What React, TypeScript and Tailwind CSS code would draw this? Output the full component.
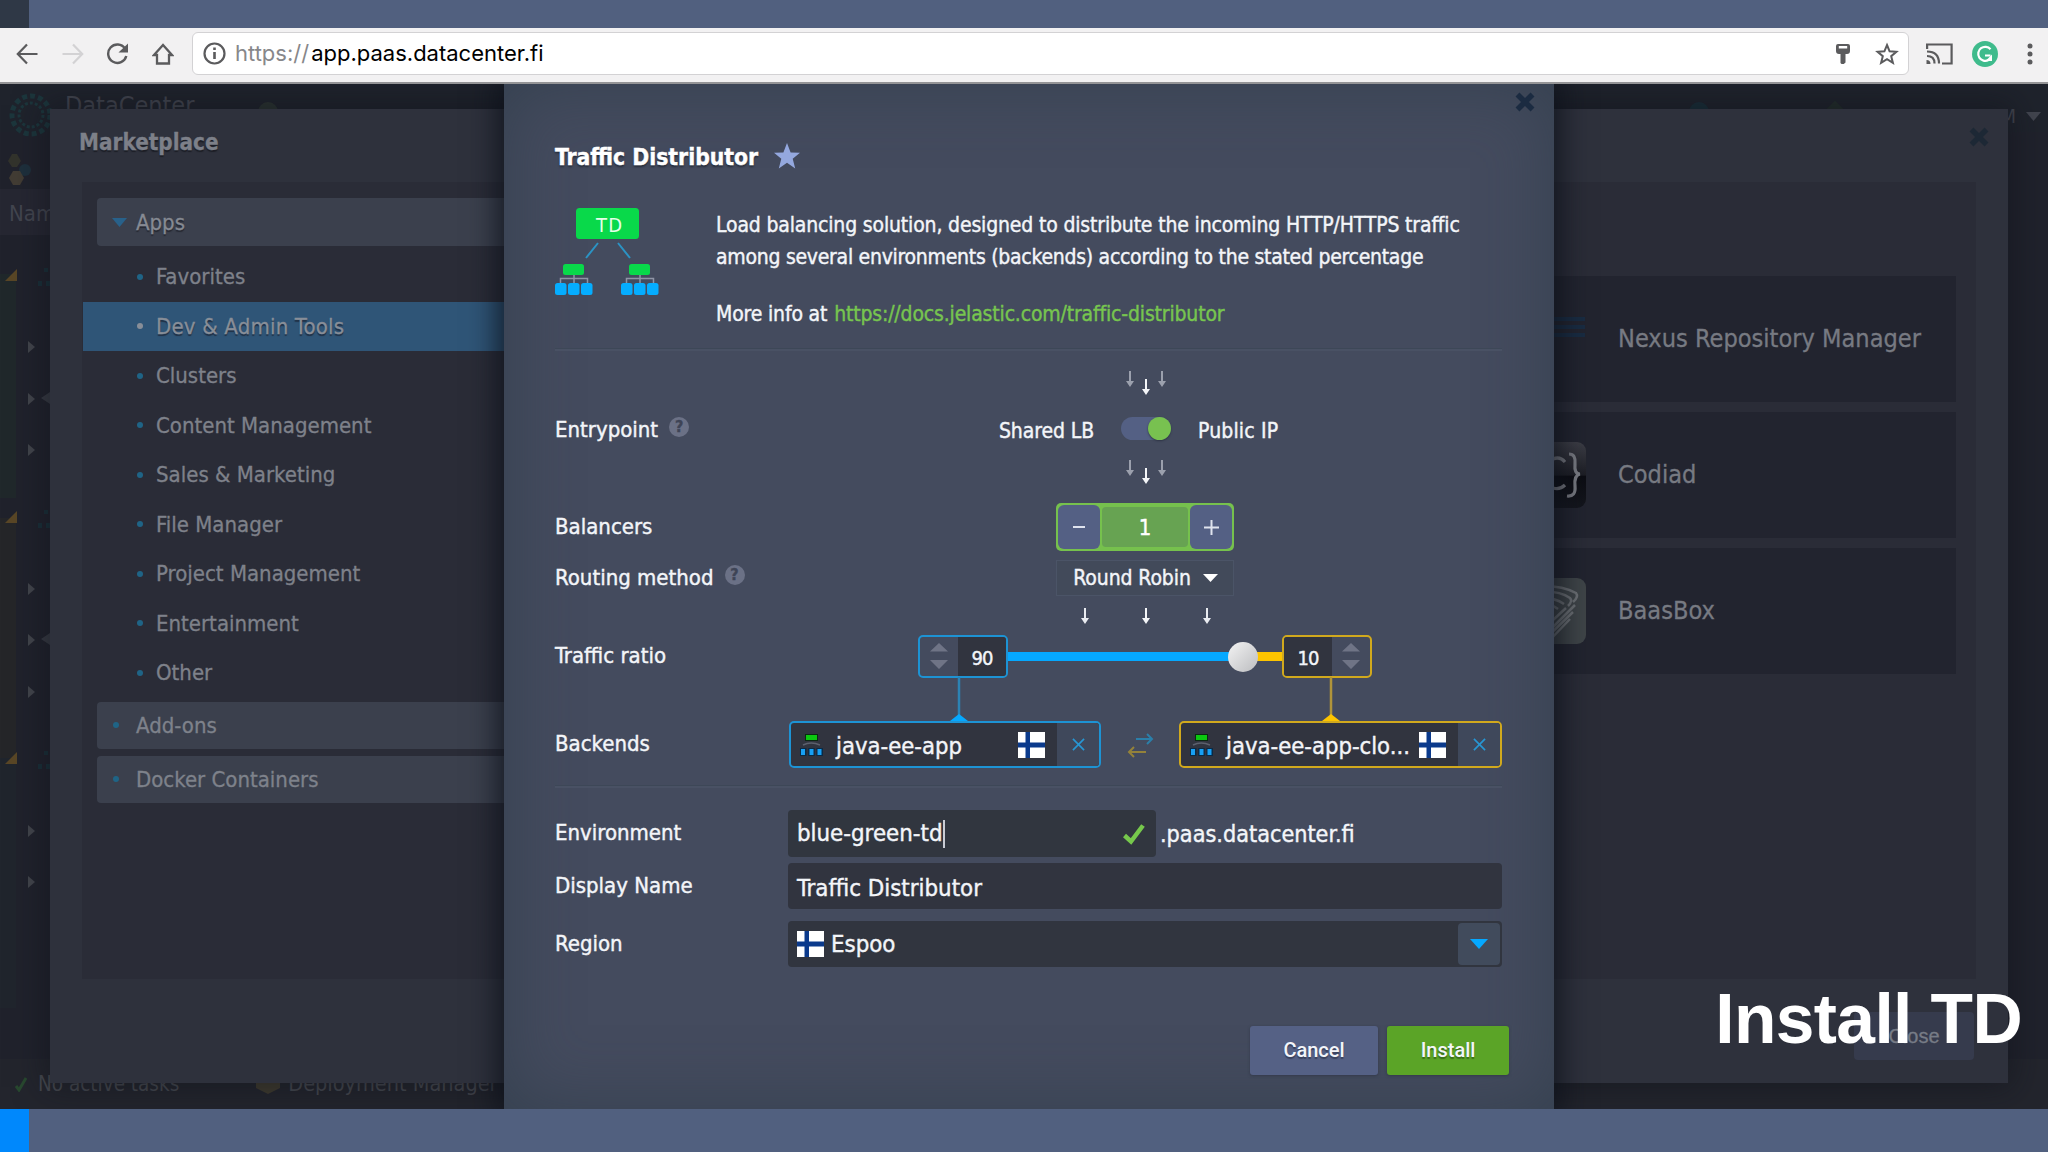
import { ReactNode } from "react";
import { clsx } from "clsx";

const appCategories = [
    "Favorites",
    "Dev & Admin Tools",
    "Clusters",
    "Content Management",
    "Sales & Marketing",
    "File Manager",
    "Project Management",
    "Entertainment",
    "Other",
];

const treeCorners = [197, 439, 680];
const treeArrows = [263, 315, 366, 505, 556, 608, 747, 798];

function BrowserBar() {
    return (
        <header className="flex h-14 shrink-0 items-center border-b-2 border-[#949496] bg-[#f2f1f2] pt-px pr-[13px] pl-4 text-[#5b5b5d]">
            <svg className="mb-1 h-[22px] w-[22px]" viewBox="0 0 22 22" fill="none" stroke="currentColor" strokeWidth="2.2">
                <path d="M21.5 11H2M11 1.5L1.8 11l9.2 9.5" />
            </svg>
            <svg className="mb-1 ml-6 h-[22px] w-[22px] text-[#d3d2d4]" viewBox="0 0 22 22" fill="none" stroke="currentColor" strokeWidth="2.2">
                <path d="M.5 11H20M11 1.5l9.2 9.5-9.2 9.5" />
            </svg>
            <svg className="mb-1 ml-[22px] h-[22px] w-[23px]" viewBox="0 0 23 22" fill="none">
                <path d="M19 5.5A9.2 9.2 0 1 0 20.3 13" stroke="currentColor" strokeWidth="2.4" />
                <path d="M22 .5v9h-9.5z" fill="currentColor" />
            </svg>
            <svg className="mb-1 ml-[23px] h-[22px] w-[22px]" viewBox="0 0 22 22" fill="none" stroke="currentColor" strokeWidth="2.3">
                <path d="M11 2L2 12h3v8.500h12V12h3z" />
            </svg>
            <div className="mb-1 ml-[18px] flex h-[43px] w-[1717px] items-center rounded-md border border-[#d3d2d4] bg-white pr-[9px] pl-[10px]">
                <svg className="h-[23px] w-[23px]" viewBox="0 0 23 23" fill="none" stroke="currentColor" strokeWidth="2.2">
                    <circle cx="11.5" cy="11.5" r="10" />
                    <path d="M11.5 10v7M11.5 5.500v2.500" strokeWidth="2.6" />
                </svg>
                <p className="mb-px ml-[9px] flex-1 font-['Inter',sans-serif] text-[22px] leading-none text-black">
                    <span className="mr-0.5 text-[#87878a]">https://</span>app.paas.datacenter.fi
                </p>
                <svg className="h-5 w-4" viewBox="0 0 16 20" fill="currentColor">
                    <path fillRule="evenodd" d="M3 0h10q2 0 2 2v5q0 3-3 3h-1.500v8.500L8.800 20H6.500l-1-1V10H4Q1 10 1 7V2q0-2 2-2zm.8 2v2.500h8.400V2z" />
                </svg>
                <svg className="ml-6 h-6 w-6" viewBox="0 0 24 24" fill="none" stroke="currentColor" strokeWidth="2">
                    <path d="M12 3l2.600 6.300 6.800.5-5.200 4.400 1.700 6.700L12 17.200l-5.900 3.700 1.700-6.700-5.200-4.400 6.800-.5z" />
                </svg>
            </div>
            <svg className="mb-1 ml-[17px] h-[22px] w-[27px]" viewBox="0 0 27 22" fill="none" stroke="currentColor" strokeWidth="2.2">
                <path d="M1.100 6V1.500h24.500v19H16M1 8.500q12 0 12 12M1 13q7.500 0 7.500 7.500" />
                <path d="M.5 17q4 0 4 4h-4z" fill="currentColor" stroke="none" />
            </svg>
            <svg className="mb-1 ml-[19px] h-[26px] w-[26px]" viewBox="0 0 26 26" fill="none">
                <circle cx="13" cy="13" r="13" fill="#3fbb8c" />
                <path d="M18.500 8.200A7 7 0 1 0 16.500 19M13 14.500h5.500" stroke="#fff" strokeWidth="2.200" />
                <path d="M20 13.500v6.500h-6.500z" fill="#fff" />
            </svg>
            <svg className="mb-1 ml-[29px] h-[22px] w-[6px]" viewBox="0 0 6 22" fill="currentColor">
                <circle cx="3" cy="3" r="2.5" />
                <circle cx="3" cy="11" r="2.5" />
                <circle cx="3" cy="19" r="2.5" />
            </svg>
        </header>
    );
}

function Dashboard() {
    return (
        <div className="flex h-full flex-col justify-between bg-[#20222c] text-[#42454f]">
            <div className="flex h-12 items-start bg-[#1f232c] pl-[65px]">
                <span className="mt-[6px] text-[25px] leading-8">DataCenter</span>
                <span className="mt-[18px] ml-16 h-5 w-5 rounded-full bg-[#2a3331]" />
                <span className="mt-[18px] ml-[1411px] h-5 w-5 rounded-full bg-[#192e38]" />
                <span className="mt-[19px] ml-[120px] h-3 w-3 rotate-45 bg-[#222d2b]" />
                <span className="mt-[18px] ml-[159px] text-[20px] leading-[28px]">M</span>
                <svg className="mt-[28px] ml-[10px] h-[9px] w-[15px]" viewBox="0 0 15 9" fill="currentColor">
                    <path d="M0 0h15L7.500 9z" />
                </svg>
            </div>
            <svg className="absolute top-0 left-0 h-full w-14" viewBox="0 0 56 1025" fill="none">
                <g stroke="#1c363c" strokeWidth="5">
                    <circle cx="31" cy="31" r="19" strokeDasharray="5 3" />
                    <circle cx="31" cy="31" r="12" strokeWidth="3" strokeDasharray="3 2" />
                </g>
                <path d="M8 77l4-7h5l4 7-4 6h-5z" fill="#32332c" />
                <circle cx="25" cy="86" r="6" fill="#1e303c" />
                <path d="M9 94l4-7h7l4 7-4 7h-7z" fill="#423c34" />
                <path d="M0 105h56v46H0z" fill="#262732" />
                <path d="M0 190h16v224H0z" fill="#20282b" />
                <path d="M0 434h16v240H0z" fill="#252629" />
                <path d="M0 674h16v250H0z" fill="#20252d" />
                {treeCorners.map((y) => (
                    <g key={y}>
                        <path d={`M5 ${y}l12-12v12z`} fill="#594626" />
                        <path d={`M40 ${y}v5M48 ${y}v5M46 ${y - 13}v4`} stroke="#1a3039" strokeWidth="4" />
                    </g>
                ))}
                {treeArrows.map((y) => (
                    <path key={y} d={`M28 ${y - 6}l7 6-7 6z`} fill="#42454c" />
                ))}
                <path d="M41 314l9-6v12zM41 555l9-6v12z" fill="#373a43" />
            </svg>
            <span className="absolute top-[116px] left-[9px] w-[41px] overflow-hidden text-[22px] leading-7">Name</span>
            <div className="flex h-[50px] items-center bg-[#23252d] pl-[15px] text-[#45484f]">
                <svg className="h-4 w-3" viewBox="0 0 12 16" fill="none" stroke="#28482f" strokeWidth="3">
                    <path d="M1 10l3 4 7-12" />
                </svg>
                <span className="ml-[11px] text-[20.5px]">No active tasks</span>
                <svg className="ml-[77px] h-5 w-6" viewBox="0 0 24 20" fill="#3f3b2f">
                    <path d="M12 0l12 5v9l-12 6-12-6V5z" />
                </svg>
                <span className="ml-2 text-[21.5px]">Deployment Manager</span>
            </div>
        </div>
    );
}

function CloseIcon({ className }: { className?: string }) {
    return (
        <svg className={clsx("h-5 w-5", className)} viewBox="0 0 20 20" fill="none" stroke="currentColor" strokeWidth="5.5">
            <path d="M2.500 2.500l15 15M17.500 2.500l-15 15" />
        </svg>
    );
}

function SidebarGroup({ label }: { label: string }) {
    return (
        <div className="ml-[15px] flex h-[47px] items-center rounded-sm bg-[#3b404d] pl-4 text-[#7e828b]">
            <span className="mr-[17px] h-[6px] w-[6px] rounded-full bg-[#1f6486]" />
            {label}
        </div>
    );
}

function AppCard({ label, children }: { label: string; children: ReactNode }) {
    return (
        <div className="flex h-[126px] items-center bg-[#22242f] pl-5 text-[25.1px] text-[#777a82]">
            {children}
            <span className="ml-8">{label}</span>
        </div>
    );
}

function Marketplace() {
    return (
        <section className="absolute top-[25px] left-[50px] flex h-[974px] w-[1958px] flex-col bg-[#2e313c] px-8 text-[22px] shadow-[0_0_30px_4px_rgba(14,16,24,0.5)] [-webkit-text-stroke:0.3px]">
            <div className="flex h-[73px] items-start justify-between">
                <h2 className="mt-[18px] ml-[-3px] text-[22.3px] leading-[30px] font-bold text-[#7d8089] [text-shadow:0_2px_1px_#1c1e26]">Marketplace</h2>
                <CloseIcon className="mt-[18px] mr-[-13px] text-[#1d2835]" />
            </div>
            <div className="flex h-[797px] justify-between bg-[#2a2c37] pr-5">
                <nav className="w-[500px] pt-4">
                    <div className="ml-[15px] flex h-12 items-center rounded-sm bg-[#3b404d] pl-[15px] text-[#868a93] [text-shadow:0_2px_1px_#252832]">
                        <svg className="mr-[9px] h-[9px] w-[15px]" viewBox="0 0 15 9" fill="#28618a">
                            <path d="M0 0h15L7.500 9z" />
                        </svg>
                        Apps
                    </div>
                    <ul className="ml-px pt-[6px] pb-1">
                        {appCategories.map((name, idx) => (
                            <li
                                key={name}
                                className={clsx(
                                    "flex h-[49.5px] items-center pl-[54px]",
                                    idx === 1
                                        ? "bg-[#2f5577] tracking-[0.2px] text-[#888e98] [text-shadow:0_2px_1px_#203045]"
                                        : "text-[#7e818a]"
                                )}
                            >
                                <span className={clsx("mr-[13px] h-[6px] w-[6px] rounded-full", idx === 1 ? "bg-[#888e98]" : "bg-[#1f6486]")} />
                                {name}
                            </li>
                        ))}
                    </ul>
                    <SidebarGroup label="Add-ons" />
                    <div className="h-[7px]" />
                    <SidebarGroup label="Docker Containers" />
                </nav>
                <div className="flex w-[456px] flex-col gap-[10px] pt-[94px]">
                    <AppCard label="Nexus Repository Manager">
                        <svg className="h-[66px] w-[66px]" viewBox="0 0 66 66" fill="none" stroke="#192c42" strokeWidth="4">
                            <path d="M34 13h31M34 21h31M34 29h31" />
                        </svg>
                    </AppCard>
                    <AppCard label="Codiad">
                        <svg className="h-[66px] w-[66px]" viewBox="0 0 66 66" fill="none">
                            <defs>
                                <linearGradient id="codiad" x1="0" y1="0" x2="0" y2="1">
                                    <stop offset="0" stopColor="#3d3e46" />
                                    <stop offset=".5" stopColor="#1d1e25" />
                                    <stop offset=".52" stopColor="#0c0d13" />
                                    <stop offset="1" stopColor="#14161d" />
                                </linearGradient>
                            </defs>
                            <rect width="66" height="66" rx="9" fill="url(#codiad)" />
                            <path d="M45 20q-5-6-12-3a15 15 0 0 0 0 29q7 2 12-3M49 12q7 0 6 10t5 10q-6 1-5 12t-8 10" stroke="#7c7e85" strokeWidth="3.200" />
                        </svg>
                    </AppCard>
                    <AppCard label="BaasBox">
                        <svg className="h-[66px] w-[66px]" viewBox="0 0 66 66" fill="none">
                            <rect width="66" height="66" rx="9" fill="#3f4548" />
                            <g stroke="#6d7175" strokeWidth="2.5">
                                <path d="M18 8q24-1 38 7 3 4-3 9M18 14q20-2 32 6 3 3-2 8M18 20q16-1 26 6M16 26q14-1 22 5" />
                                <path d="M55 27L22 60M53 34L24 62M50 41L28 64M46 30L20 54" />
                            </g>
                        </svg>
                    </AppCard>
                </div>
            </div>
            <button className="mt-[33px] mr-0.5 flex h-12 w-[120px] items-center justify-center self-end rounded-sm bg-[#363b4d] font-['Liberation_Sans',sans-serif] text-[20px] font-medium text-[#777b86]">
                Close
            </button>
        </section>
    );
}

function HelpIcon() {
    return (
        <span className="mb-[5px] flex h-5 w-5 items-center justify-center rounded-full bg-[#6b7186] text-[16px] leading-none font-bold text-[#3e4456]">
            ?
        </span>
    );
}

function FormRow({ label, help, className, children }: { label: string; help?: boolean; className?: string; children: ReactNode }) {
    return (
        <div className={clsx("flex items-center", className)}>
            <div className="flex w-[233px] shrink-0 items-center gap-[11px] pb-[2px]">
                {label}
                {help && <HelpIcon />}
            </div>
            <div className="flex h-full w-[714px] items-center">{children}</div>
        </div>
    );
}

function Divider({ className }: { className?: string }) {
    return <div className={clsx("h-[3px] border-t border-[#3d4757] bg-[#495164]", className)} />;
}

// three small down arrows; outer ones sit higher and fade when staggered
function Arrows({ gap, staggered }: { gap: number; staggered?: boolean }) {
    const outer = staggered ? "#9ba0ad" : "#e9ebf0";
    return (
        <svg className="ml-[234px] h-6 w-[714px]" viewBox="0 0 714 24">
            {[-gap, 0, gap].map((dx) => (
                <g
                    key={dx}
                    transform={`translate(${357 + dx} ${staggered && dx === 0 ? 8 : 0})`}
                    fill={dx === 0 ? "#f4f5f8" : outer}
                >
                    <path d="M-1 0h2v10h3L0 16l-4-6h3z" />
                </g>
            ))}
        </svg>
    );
}

function FinlandFlag() {
    return (
        <svg className="h-[26px] w-[27px] shrink-0" viewBox="0 0 27 26">
            <path d="M0 0h27v26H0z" fill="#fff" />
            <path d="M7.500 0h4.500v26H7.500zM0 10.500h27v5H0z" fill="#0b3a8c" />
        </svg>
    );
}

function SpinnerArrows() {
    return (
        <svg className="h-[26px] w-[18px]" viewBox="0 0 18 26" fill="#6f7486">
            <path d="M0 8.500L9 0l9 8.500zM0 17h18l-9 9z" />
        </svg>
    );
}

function Backend({ name, className, nameClass }: { name: string; className: string; nameClass: string }) {
    return (
        <div className={clsx("flex h-[47px] items-center rounded-[5px] border-2 bg-[#31343f] pl-[9px]", className)}>
            <svg className="h-6 w-[23px] shrink-0" viewBox="0 0 23 24">
                <path d="M5 1h13v7H5z" fill="#0a2a12" />
                <path d="M6 2h11v5H6z" fill="#0bc810" />
                <path d="M3 12q8-4 17 0" fill="none" stroke="#5c616e" strokeWidth="1.500" />
                <path d="M0 15h6.500v8H0zM8.200 15h6.500v8H8.200zM16.400 15H23v8h-6.600z" fill="#0a2a45" />
                <path d="M1 16h4v6H1zM9.500 16h4v6h-4zM17.500 16h4v6h-4z" fill="#18a0f5" />
            </svg>
            <span className={clsx("ml-[13px] pt-1 text-[23.6px] whitespace-nowrap", nameClass)}>{name}</span>
            <FinlandFlag />
            <span className="ml-3 flex h-full flex-1 items-center justify-center rounded-r-[3px] bg-[#3f485b]">
                <svg className="h-[13px] w-[13px]" viewBox="0 0 14 14" stroke="#2796d3" strokeWidth="1.8">
                    <path d="M1 1l12 12M13 1L1 13" />
                </svg>
            </span>
        </div>
    );
}

function TrafficLogo() {
    return (
        <svg className="h-[88px] w-[104px]" viewBox="0 0 104 88">
            <rect x="21" y="0" width="63" height="31" rx="3.5" fill="#09d94a" />
            <text x="54" y="24" fill="#e6ffe9" fontSize="20" textAnchor="middle" textLength="26">TD</text>
            <path d="M43 35L31 50M63 35l12 15" stroke="#2b93c4" strokeWidth="2" />
            {[0, 66].map((x) => (
                <g key={x} transform={`translate(${x} 0)`}>
                    <path d="M19 67v8M5.500 75v-4.500h27V75" fill="none" stroke="#8f95a6" strokeWidth="1.500" />
                    <rect x="8" y="56" width="21" height="11" rx="2.5" fill="#09d94a" />
                    <rect x="0" y="75" width="11.5" height="12" rx="2.5" fill="#05adff" />
                    <rect x="13" y="75" width="11.5" height="12" rx="2.5" fill="#05adff" />
                    <rect x="26" y="75" width="11.5" height="12" rx="2.5" fill="#05adff" />
                </g>
            ))}
        </svg>
    );
}

function InstallDialog() {
    return (
        <section className="absolute top-0 left-[504px] flex h-[1025px] w-[1050px] flex-col bg-[#444b5e] pr-[52px] pl-[51px] text-[22px] text-[#f3f5f9] shadow-[inset_0_0_70px_rgba(44,58,70,0.6),0_0_26px_8px_rgba(12,16,26,0.75)] [-webkit-text-stroke:0.4px]">
            <CloseIcon className="absolute top-[8px] right-[19px] text-[#1b2b41]" />
            <div className="mt-[53px] flex h-10 items-center">
                <h1 className="text-[22.7px] font-bold text-white [text-shadow:0_2px_2px_#262c39]">Traffic Distributor</h1>
                <svg className="mb-[3px] ml-4 h-[26px] w-[26px]" viewBox="0 0 26 26" fill="#94a8de">
                    <path d="M13 0l3.600 9.500 9.400.2-7.300 6 2.500 9.800-8.200-5.700-8.200 5.700 2.500-9.800L0 9.700l9.400-.2z" />
                </svg>
            </div>
            <div className="mt-[31px] flex h-[122px] items-start">
                <TrafficLogo />
                <div className="mt-px ml-[57px] text-[21px] leading-8 tracking-[-0.16px] whitespace-nowrap">
                    <p>Load balancing solution, designed to distribute the incoming HTTP/HTTPS traffic</p>
                    <p className="tracking-[-0.27px]">among several environments (backends) according to the stated percentage</p>
                    <p className="mt-[25px]">
                        More info at <span className="ml-px text-[#77c54f]">https://docs.jelastic.com/traffic-distributor</span>
                    </p>
                </div>
            </div>
            <Divider className="mt-[18px]" />

            <div className="h-[56px] pt-5">
                <Arrows gap={16} staggered />
            </div>
            <FormRow label="Entrypoint" help className="h-[46px]">
                <div className="grid w-full grid-cols-[1fr_50px_1fr] items-center gap-[27px] pl-0.5 text-[21px] tracking-[-0.1px]">
                    <span className="pt-[3px] text-right">Shared LB</span>
                    <span className="mb-[3px] flex h-[23px] justify-end rounded-full bg-[#546084]">
                        <span className="h-[23px] w-[23px] rounded-full bg-[#78c150] shadow-[0_1px_2px_#2e3546]" />
                    </span>
                    <span className="pt-[3px] tracking-[0.15px]">Public IP</span>
                </div>
            </FormRow>
            <div className="h-[50px] pt-[7px]">
                <Arrows gap={16} staggered />
            </div>
            <FormRow label="Balancers" className="h-12">
                <div className="mx-auto flex h-12 w-[178px] items-center justify-between rounded-[5px] bg-[#76c14d] p-[2px]">
                    <span className="flex h-11 w-[42px] items-center justify-center rounded-md bg-[#546084]">
                        <span className="h-[2px] w-3 bg-[#dfe3ee]" />
                    </span>
                    <span className="flex h-10 w-[86px] items-center justify-center rounded-sm bg-[#67a352] text-white">1</span>
                    <span className="flex h-11 w-[42px] items-center justify-center rounded-md bg-[#546084]">
                        <svg className="h-[15px] w-[15px]" viewBox="0 0 15 15" stroke="#dfe3ee" strokeWidth="2">
                            <path d="M0 7.500h15M7.500 0v15" />
                        </svg>
                    </span>
                </div>
            </FormRow>
            <FormRow label="Routing method" help className="mt-[9px] h-[36px]">
                <div className="mx-auto flex h-[36px] w-[178px] items-center justify-center border border-[#4b5467] bg-[#424a5a]">
                    <span className="pt-px pl-px text-[21px] tracking-[-0.1px]">Round Robin</span>
                    <svg className="ml-3 h-2 w-[15px]" viewBox="0 0 15 8" fill="#fff">
                        <path d="M0 0h15L7.500 8z" />
                    </svg>
                </div>
            </FormRow>
            <div className="h-[39px] pt-[12px]">
                <Arrows gap={61} />
            </div>
            <FormRow label="Traffic ratio" className="h-[42px]">
                <div className="ml-[130px] flex h-[43px] w-[90px] rounded-[5px] border-2 border-[#1d93d4] text-[20px] tracking-[-1px]">
                    <span className="flex w-[38px] items-center justify-center">
                        <SpinnerArrows />
                    </span>
                    <span className="flex flex-1 items-center justify-center rounded-r-[3px] bg-[#31343f] pt-[4px]">90</span>
                </div>
                <div className="relative flex h-[9px] w-[274px]">
                    <span className="w-[235px] bg-[#05a8ff]" />
                    <span className="flex-1 bg-[#fdc400]" />
                    <span className="absolute top-[-10px] left-[220px] h-[30px] w-[30px] rounded-full bg-linear-to-br from-[#f4f4f4] to-[#bcbdc0]" />
                </div>
                <div className="flex h-[43px] w-[90px] rounded-[5px] border-2 border-[#d1a91d] text-[20px] tracking-[-1px]">
                    <span className="flex flex-1 items-center justify-center rounded-l-[3px] bg-[#31343f] pt-[4px]">10</span>
                    <span className="flex w-[38px] items-center justify-center">
                        <SpinnerArrows />
                    </span>
                </div>
            </FormRow>
            <svg className="ml-[233px] h-11 w-[714px]" viewBox="0 0 714 44">
                <path d="M171 0v38" stroke="#2c83b4" strokeWidth="2.5" />
                <path d="M162 44l9-7 9 7z" fill="#05a8ff" />
                <path d="M543 0v38" stroke="#b0943a" strokeWidth="2.5" />
                <path d="M534 44l9-7 9 7z" fill="#fdc400" />
            </svg>
            <FormRow label="Backends" className="h-[47px]">
                <Backend name="java-ee-app" className="ml-px w-[312px] border-[#1d93d4]" nameClass="w-[182px]" />
                <svg className="mx-[25px] h-[26px] w-7" viewBox="0 0 28 26" fill="none" strokeWidth="2">
                    <path d="M10 7h16M21 2l5 5-5 5" stroke="#2b7fa9" />
                    <path d="M20 20H3M8 15l-5 5 5 5" stroke="#94823a" />
                </svg>
                <Backend name="java-ee-app-clo..." className="ml-auto w-[323px] border-[#d1a91d]" nameClass="w-[193px]" />
            </FormRow>
            <Divider className="mt-[17px]" />

            <FormRow label="Environment" className="mt-[22px] h-[47px]">
                <div className="flex h-full w-[368px] items-center rounded-[4px] bg-[#31363f] pt-px pr-[11px] pl-[9px] text-[23.8px]">
                    blue-green-td
                    <span className="h-7 w-[2px] bg-[#c9ccd4]" />
                    <svg className="ml-auto h-[21px] w-[22px]" viewBox="0 0 22 21" fill="none" stroke="#76c84c" strokeWidth="4.5">
                        <path d="M1.500 11.500l6.500 6L20 1.500" />
                    </svg>
                </div>
                <span className="ml-1 pt-px text-[23.2px]">.paas.datacenter.fi</span>
            </FormRow>
            <FormRow label="Display Name" className="mt-[6px] h-[46px]">
                <div className="flex h-full w-full items-center rounded-[4px] bg-[#31343f] pt-[6px] pl-[9px] text-[23.8px]">Traffic Distributor</div>
            </FormRow>
            <FormRow label="Region" className="mt-3 h-[46px]">
                <div className="flex h-full w-full items-center rounded-[4px] bg-[#31353f] pr-[2px] pl-[9px] text-[23.8px]">
                    <FinlandFlag />
                    <span className="ml-[7px] pt-0.5">Espoo</span>
                    <span className="ml-auto flex h-[42px] w-[42px] items-center justify-center rounded-sm bg-[#414b5c]">
                        <svg className="h-[10px] w-[18px]" viewBox="0 0 18 10" fill="#05a8ff">
                            <path d="M0 0h18L9 10z" />
                        </svg>
                    </span>
                </div>
            </FormRow>
            <div className="mt-[59px] mr-[-7px] flex h-[49px] justify-end gap-[9px] font-['Roboto',sans-serif] text-[20px] font-medium [-webkit-text-stroke:0]">
                <button className="w-[128px] rounded-[3px] bg-[#556185] pb-[2px] shadow-[0_1px_3px_#333a4b] [text-shadow:0_2px_1px_#39415c]">Cancel</button>
                <button className="w-[122px] rounded-[3px] bg-[#5ba427] pb-[2px] shadow-[0_1px_3px_#333a4b] [text-shadow:0_2px_1px_#3a6d18]">Install</button>
            </div>
        </section>
    );
}

export default function App() {
    return (
        <div className="flex h-[1152px] w-[2048px] flex-col overflow-hidden bg-[#51607f] font-['DejaVu_Sans_Condensed','DejaVu_Sans',sans-serif]">
            <div className="h-7 shrink-0">
                <div className="h-full w-[29px] bg-[#2f3846]" />
            </div>
            <BrowserBar />
            <main className="relative h-[1025px] shrink-0 overflow-hidden">
                <Dashboard />
                <Marketplace />
                <InstallDialog />
                <p className="absolute top-[895px] right-[26px] font-['Liberation_Sans',sans-serif] text-[69.5px] leading-[80px] font-bold tracking-[-0.6px] text-white">
                    Install TD
                </p>
            </main>
            <div className="h-[43px] shrink-0">
                <div className="h-full w-[29px] bg-[#0088fc]" />
            </div>
        </div>
    );
}
